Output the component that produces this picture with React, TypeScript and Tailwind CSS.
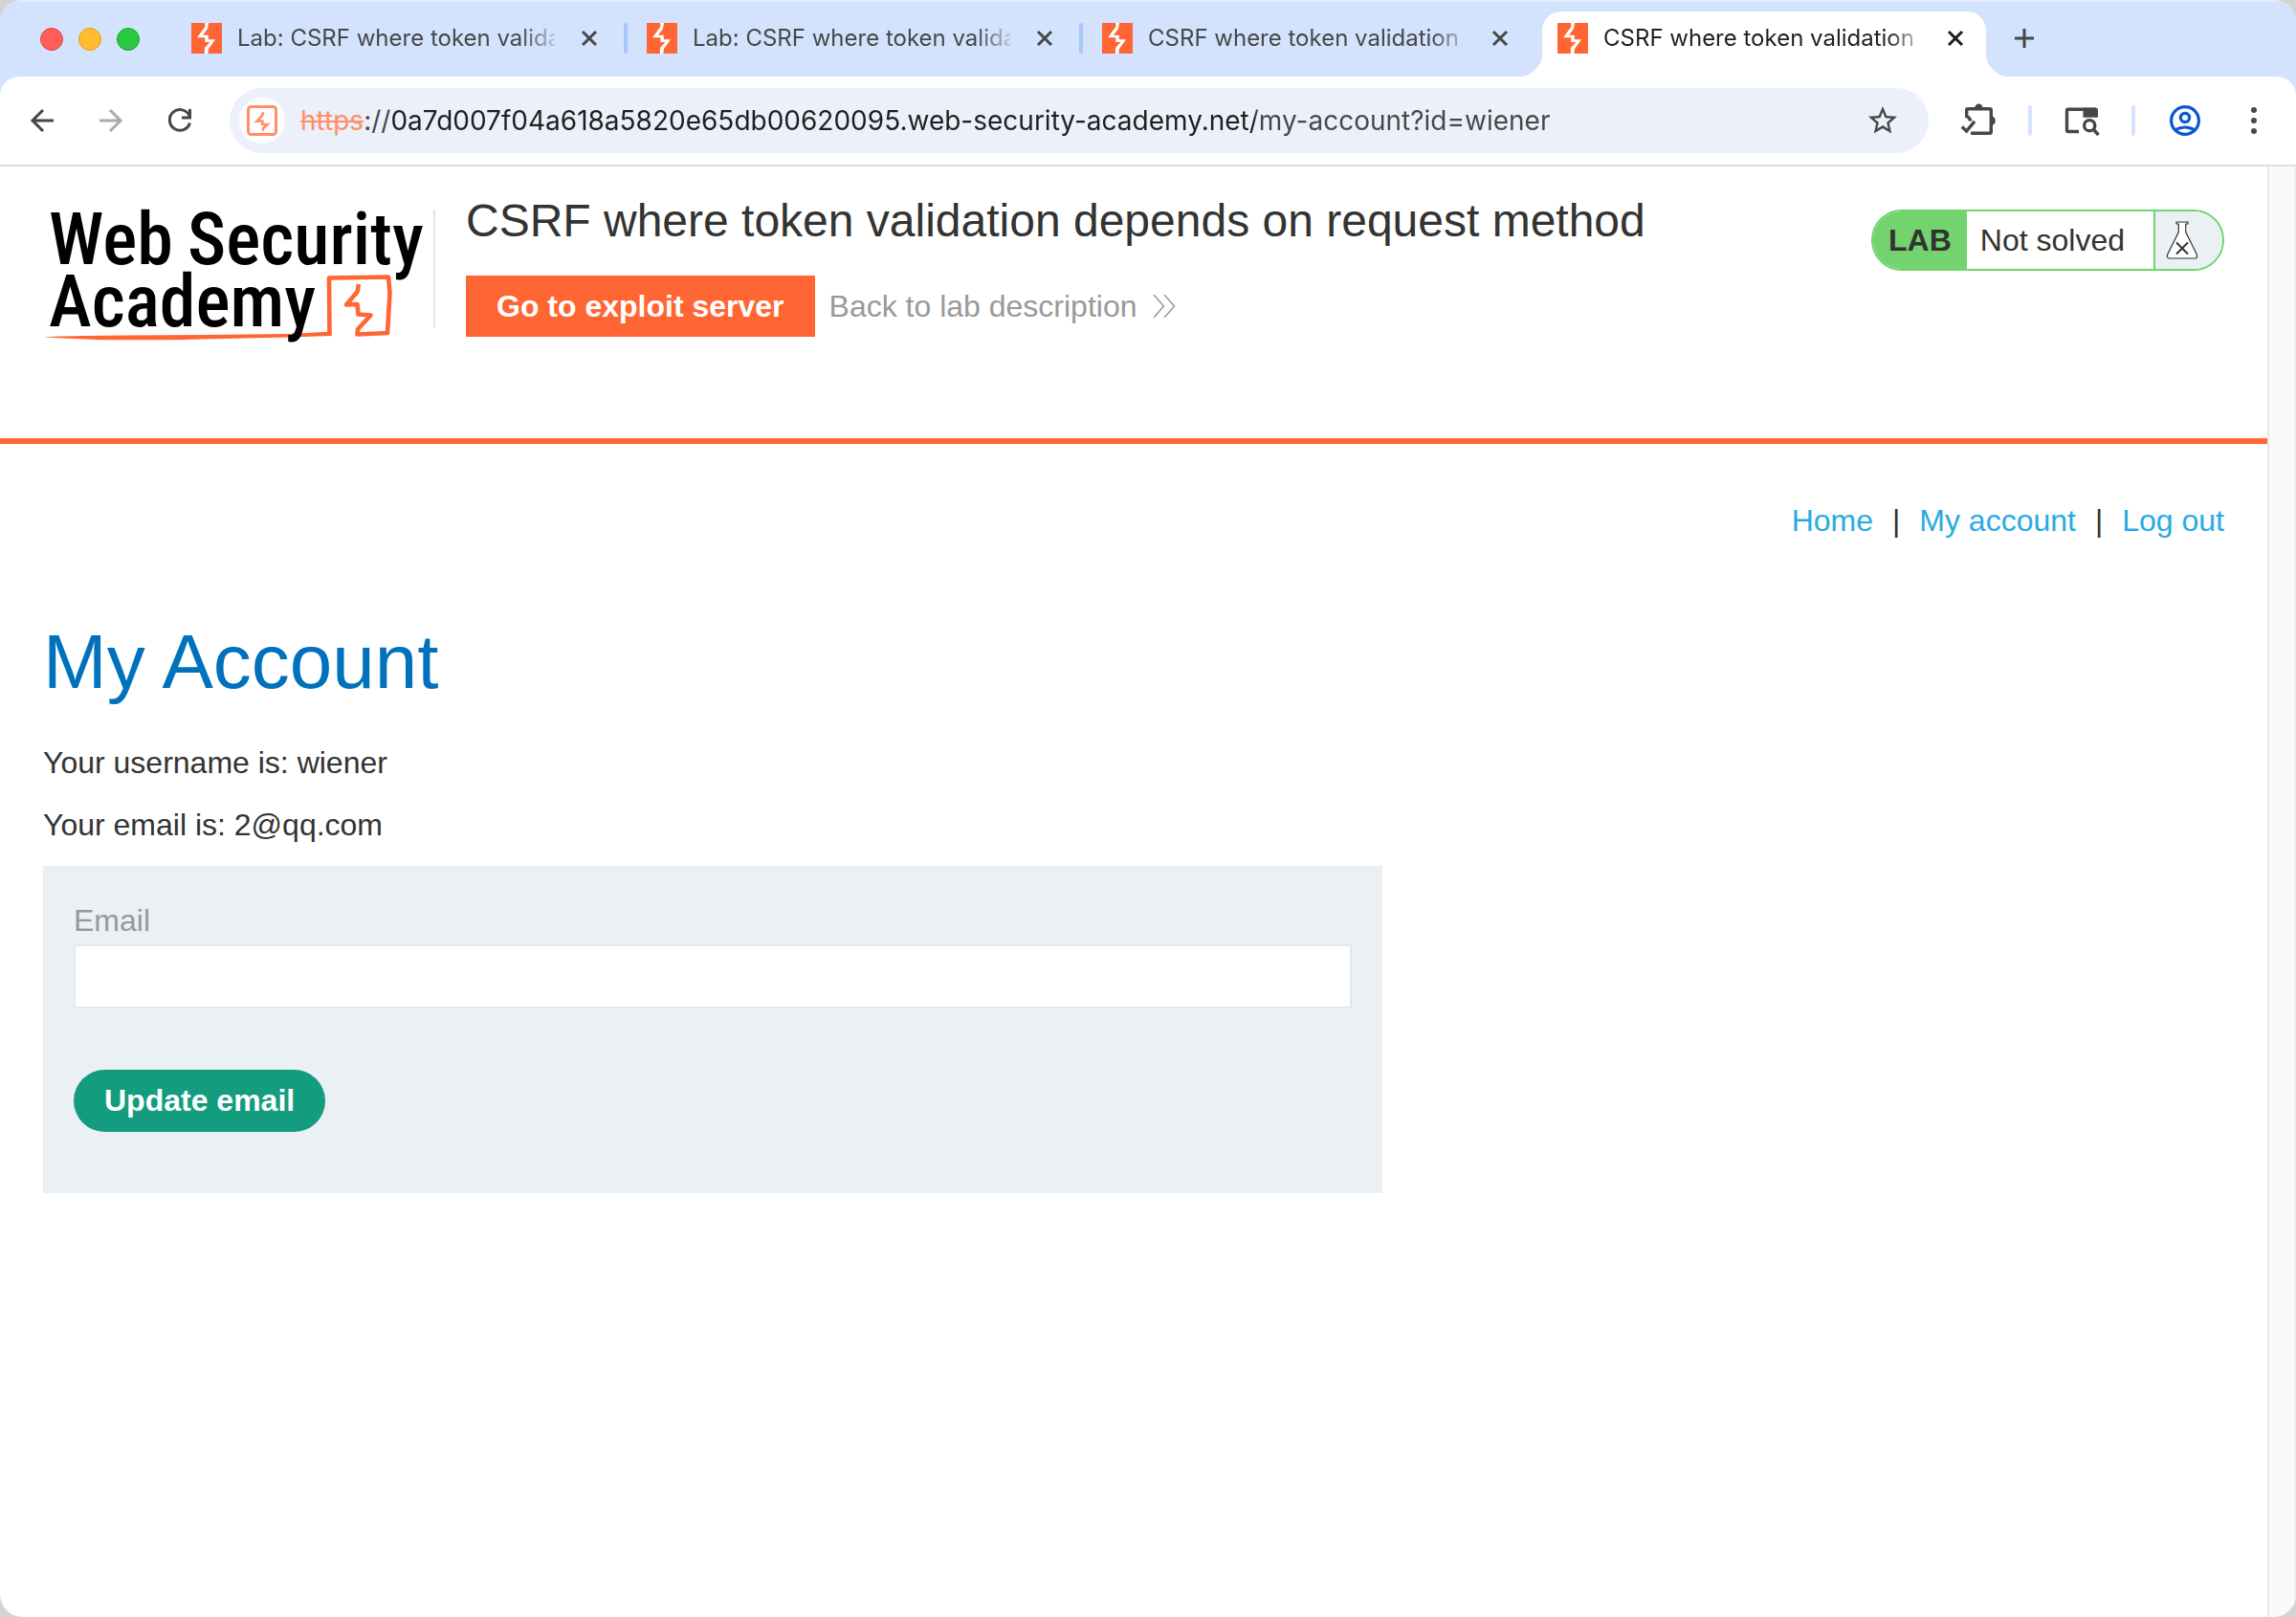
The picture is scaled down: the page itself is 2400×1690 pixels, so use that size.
import { MdOutlineStarBorder } from "react-icons/md";

const tabs = [
  { title: "Lab: CSRF where token validation", active: false },
  { title: "Lab: CSRF where token validation", active: false },
  { title: "CSRF where token validation d", active: false },
  { title: "CSRF where token validation d", active: true },
];

const navLinks = ["Home", "My account", "Log out"];

function Favicon() {
  return (
    <svg viewBox="0 0 32 32" className="size-8 shrink-0" aria-hidden="true">
      <rect width="32" height="32" fill="#ff6633" />
      <path
        d="M14.3 0H18L17 6L12 12.8H17.8V17.2H25L18 27L17.3 32H13.8L14 26L19.5 20H14.3V15.3H6L14.3 4Z"
        fill="#fff"
      />
    </svg>
  );
}

function CloseIcon() {
  return (
    <svg viewBox="0 0 24 24" className="size-6" fill="none" stroke="currentColor" strokeWidth="3" aria-hidden="true">
      <path d="M5 5L19 19M19 5L5 19" />
    </svg>
  );
}

function Tab({ title, active }: { title: string; active: boolean }) {
  return (
    <div
      className={
        active
          ? "relative flex h-[68px] w-[464px] min-w-0 items-start rounded-t-[20px] bg-white pt-3 pr-5 pl-4 text-[#1f1f1f] before:absolute before:bottom-0 before:-left-6 before:size-6 before:bg-[radial-gradient(circle_at_0_0,transparent_24px,white_24px)] after:absolute after:-right-6 after:bottom-0 after:size-6 after:bg-[radial-gradient(circle_at_100%_0,transparent_24px,white_24px)]"
          : "flex h-[68px] w-[464px] min-w-0 items-start pt-3 pr-5 pl-4 text-[#474747]"
      }
    >
      <Favicon />
      <button
        type="button"
        className="ml-4 h-8 min-w-0 flex-1 overflow-hidden text-left text-2xl leading-8 whitespace-nowrap [mask-image:linear-gradient(to_right,#000_calc(100%-36px),transparent_calc(100%+8px))]"
      >
        {title}
      </button>
      <button type="button" aria-label="Close tab" className="mt-1 ml-6">
        <CloseIcon />
      </button>
    </div>
  );
}

function TabStrip() {
  return (
    <div className="flex h-20 items-end border-t-2 border-[#e3ecfd] bg-[#d3e3fd]">
      <div className="flex shrink-0 gap-4 self-start pt-[27px] pl-[42px]">
        <span className="size-6 rounded-full border border-[#e2463f] bg-[#ff5f57]" />
        <span className="size-6 rounded-full border border-[#e1a116] bg-[#febc2e]" />
        <span className="size-6 rounded-full border border-[#12ac28] bg-[#28c840]" />
      </div>
      <div className="ml-[38px] flex min-w-0">
        {tabs.map((tab, i) => (
          <div key={i} className="flex min-w-0">
            {i > 0 && (
              <span className={i < 3 ? "mt-3 mr-1 ml-1 h-8 w-1 shrink-0 rounded-sm bg-[#a8c7fa]" : "w-3 shrink-0"} />
            )}
            <Tab title={tab.title} active={tab.active} />
          </div>
        ))}
      </div>
      <button type="button" aria-label="New tab" className="ml-6 self-start pt-[22px] text-[#474747]">
        <svg viewBox="0 0 32 32" className="size-8" fill="none" stroke="currentColor" strokeWidth="3" aria-hidden="true">
          <path d="M16 6V26M6 16H26" />
        </svg>
      </button>
    </div>
  );
}

function Toolbar() {
  return (
    <div className="bg-[#d3e3fd]">
      <div className="flex h-[94px] items-center rounded-t-[20px] border-b-2 border-[#dedede] bg-white px-7 text-[#474747]">
        <div className="flex shrink-0 gap-10">
          <button type="button" aria-label="Back">
            <svg viewBox="0 0 32 32" className="size-8" fill="none" stroke="currentColor" strokeWidth="3" aria-hidden="true">
              <path d="M28 16H6M17 5L6 16L17 27" />
            </svg>
          </button>
          <button type="button" aria-label="Forward" className="text-[#ababab]">
            <svg viewBox="0 0 32 32" className="size-8" fill="none" stroke="currentColor" strokeWidth="3" aria-hidden="true">
              <path d="M4 16H26M15 5L26 16L15 27" />
            </svg>
          </button>
          <button type="button" aria-label="Reload">
            <svg viewBox="0 0 32 32" className="size-8" fill="none" stroke="currentColor" strokeWidth="3" aria-hidden="true">
              <path d="M26 11A10.8 10.8 0 1 0 26.5 18.5M26.5 4V13H18" />
            </svg>
          </button>
        </div>
        <div className="ml-9 flex h-[68px] min-w-0 flex-1 items-center rounded-full bg-[#ecf0fa] pr-[30px] pl-[10px] text-[28px]">
          <span className="flex size-12 shrink-0 items-center justify-center rounded-full bg-white">
            <svg viewBox="0 0 32 32" className="size-8" fill="none" stroke="#ff8f66" aria-hidden="true">
              <rect x="1.5" y="1.5" width="29" height="29" rx="3" strokeWidth="3" />
              <path d="M17.3 7L16 11L10.5 16.6H16.2V20H21.5L17.3 24L16.3 26.5" strokeWidth="2.6" />
            </svg>
          </span>
          <span className="ml-4 text-[#ff8f66] line-through decoration-2">https</span>
          <span>://</span>
          <input
            type="text"
            aria-label="Address"
            defaultValue="0a7d007f04a618a5820e65db00620095.web-security-academy.net/my-account?id=wiener"
            className="min-w-0 flex-1 bg-[linear-gradient(90deg,#1f1f1f_904px,#474747_904px)] bg-clip-text text-transparent outline-none"
          />
          <button type="button" aria-label="Bookmark this page">
            <MdOutlineStarBorder className="size-9" />
          </button>
        </div>
        <div className="ml-8 flex shrink-0 items-center">
          <button type="button" aria-label="Extensions">
            <svg viewBox="0 0 40 40" className="size-10" fill="none" stroke="currentColor" strokeWidth="3.4" aria-hidden="true">
              <path d="M12 33.3H31.8Q33.3 33.3 33.3 31.8V9.3Q33.3 7.8 31.8 7.8H9.2Q7.7 7.8 7.7 9.3V15.5Q11.5 17 11.5 20.5" />
              <path d="M2.8 26.4L7.6 31L16 20.8" />
              <path d="M16.2 7a4.2 4.6 0 0 1 8.4 0ZM34 15.6a3.8 4.6 0 0 1 0 9.2Z" fill="currentColor" stroke="none" />
            </svg>
          </button>
          <span className="ml-8 h-8 w-1 rounded-sm bg-[#d3e3fd]" />
          <button type="button" aria-label="Side search" className="ml-8">
            <svg viewBox="0 0 40 40" className="size-10" fill="none" stroke="currentColor" strokeWidth="3.4" aria-hidden="true">
              <path d="M17 31.5H6Q4.5 31.5 4.5 30V9.8Q4.5 8.3 6 8.3H35" />
              <path d="M21.5 6.7H35Q37 6.7 37 8.7V16.7H21.5Z" fill="currentColor" stroke="none" />
              <circle cx="28.2" cy="25.2" r="5.6" />
              <path d="M32 29L37.5 35" />
            </svg>
          </button>
          <span className="ml-8 h-8 w-1 rounded-sm bg-[#d3e3fd]" />
          <button type="button" aria-label="Profile" className="ml-9 text-[#0b57d0]">
            <svg viewBox="0 0 32 32" className="size-8" fill="none" stroke="currentColor" strokeWidth="3.2" aria-hidden="true">
              <circle cx="16" cy="16" r="14.4" />
              <circle cx="16" cy="13" r="4.6" />
              <path d="M5.5 26Q16 20 26.5 26" />
            </svg>
          </button>
          <button type="button" aria-label="Menu" className="ml-10">
            <svg viewBox="0 0 32 32" className="size-8" fill="currentColor" aria-hidden="true">
              <circle cx="16" cy="5" r="3" />
              <circle cx="16" cy="16" r="3" />
              <circle cx="16" cy="27" r="3" />
            </svg>
          </button>
        </div>
      </div>
    </div>
  );
}

function AcademyLogo() {
  return (
    <svg viewBox="0 0 400 144" className="mt-4 h-36 w-[400px] shrink-0" role="img" aria-label="Web Security Academy">
      <path d="M1 138.3Q20 136.5 165 136L257 135L301 132.5V137L257 138.5L165 140.5Q60 143 1 138.3Z" fill="#ff6633" />
      <path
        d="M299.5 137L299 76.5L361 75.5L362.5 92L360 134L328.5 135.5L329 130L342.5 115.5L329.5 114.5L328.5 104L317 104.5L328.5 91L330 83"
        fill="none"
        stroke="#ff6633"
        strokeWidth="4.6"
        strokeLinejoin="round"
      />
      <g fill="#000" fontFamily="'Roboto Condensed', Lato, sans-serif" fontSize="76" fontWeight="500">
        <text x="6" y="62">Web</text>
        <text x="151" y="62">Security</text>
        <text x="6" y="127">Academy</text>
      </g>
    </svg>
  );
}

function LabStatus() {
  return (
    <div className="mt-[21px] flex h-16 shrink-0 overflow-hidden rounded-full border-2 border-[#72d36f] leading-[60px] text-[#333332]">
      <p className="bg-[#72d36f] px-4 font-bold">LAB</p>
      <p className="pr-[30px] pl-[14px]">Not solved</p>
      <span className="flex w-[72px] items-center border-l-2 border-[#72d36f] bg-[#eaf0f3] pl-[10px]">
        <svg viewBox="0 0 36 44" className="h-11 w-9" aria-hidden="true">
          <path
            d="M12 3H24V5H21.7V13.5L33.3 37Q34.5 41 31 41H5Q1.5 41 2.7 37L14.3 13.5V5H12Z"
            fill="#fff"
            stroke="#333332"
            strokeWidth="1.2"
          />
          <path d="M12 24.5L24 36.5M24 24.5L12 36.5" stroke="#333332" strokeWidth="2" />
        </svg>
      </span>
    </div>
  );
}

function LabHeader() {
  return (
    <header className="flex items-start border-b-[6px] border-[#ff6633] px-[45px] pt-6 pb-[100px]">
      <AcademyLogo />
      <span className="mt-[21px] ml-2 h-[124px] w-0.5 shrink-0 bg-[#e5e5e5]" />
      <div className="ml-8 min-w-0 flex-1">
        <h2 className="text-5xl leading-[66px]">CSRF where token validation depends on request method</h2>
        <div className="mt-6 flex items-center leading-[64px]">
          <a href="#exploit" className="bg-[#ff6633] px-8 font-bold text-white">
            Go to exploit server
          </a>
          <a href="#description" className="ml-[15px] flex items-center text-[#999999]">
            Back to lab description
            <svg viewBox="0 0 24 24" className="ml-[17px] size-6" fill="none" stroke="currentColor" strokeWidth="1.5" aria-hidden="true">
              <path d="M1 0L11.5 12L1 24M12 0L22.5 12L12 24" />
            </svg>
          </a>
        </div>
      </div>
      <LabStatus />
    </header>
  );
}

function AccountPage() {
  return (
    <main className="px-[45px] pt-12">
      <nav className="flex justify-end gap-5 leading-[64px]">
        {navLinks.map((link, i) => (
          <span key={link} className="flex gap-5">
            {i > 0 && <span>|</span>}
            <a href="#" className="text-[#29abe2]">
              {link}
            </a>
          </span>
        ))}
      </nav>
      <h1 className="mt-[68px] text-[80px] leading-[96px] text-[#0071bc]">My Account</h1>
      <p className="mt-[25px] leading-[65px]">Your username is: wiener</p>
      <p className="leading-[65px]">Your email is: 2@qq.com</p>
      <form className="mt-[10px] max-w-[1400px] bg-[#eaf0f3] px-8 pt-8 pb-16" onSubmit={(e) => e.preventDefault()}>
        <label htmlFor="email" className="block leading-[50px] text-[#999999]">
          Email
        </label>
        <input
          id="email"
          type="email"
          className="block h-[67px] w-full border-2 border-[#e6e6e6] bg-white px-3 outline-none"
        />
        <button type="submit" className="mt-16 h-[65px] rounded-full bg-[#149c7f] px-8 pb-0.5 font-bold text-white">
          Update email
        </button>
      </form>
    </main>
  );
}

export default function App() {
  return (
    <div className="flex min-h-screen flex-col bg-[#d4d4d4]">
      <div className="flex flex-1 flex-col overflow-hidden rounded-[24px] bg-white font-[Inter,sans-serif]">
        <TabStrip />
        <Toolbar />
        <div className="flex flex-1 font-['Liberation_Sans',Arial,sans-serif] text-[32px] text-[#333332]">
          <div className="min-w-0 flex-1">
            <LabHeader />
            <AccountPage />
          </div>
          <div className="w-[30px] shrink-0 border-x-2 border-l-[#e8e8e8] border-r-[#ededed] bg-[#fafafa]" />
        </div>
      </div>
    </div>
  );
}
